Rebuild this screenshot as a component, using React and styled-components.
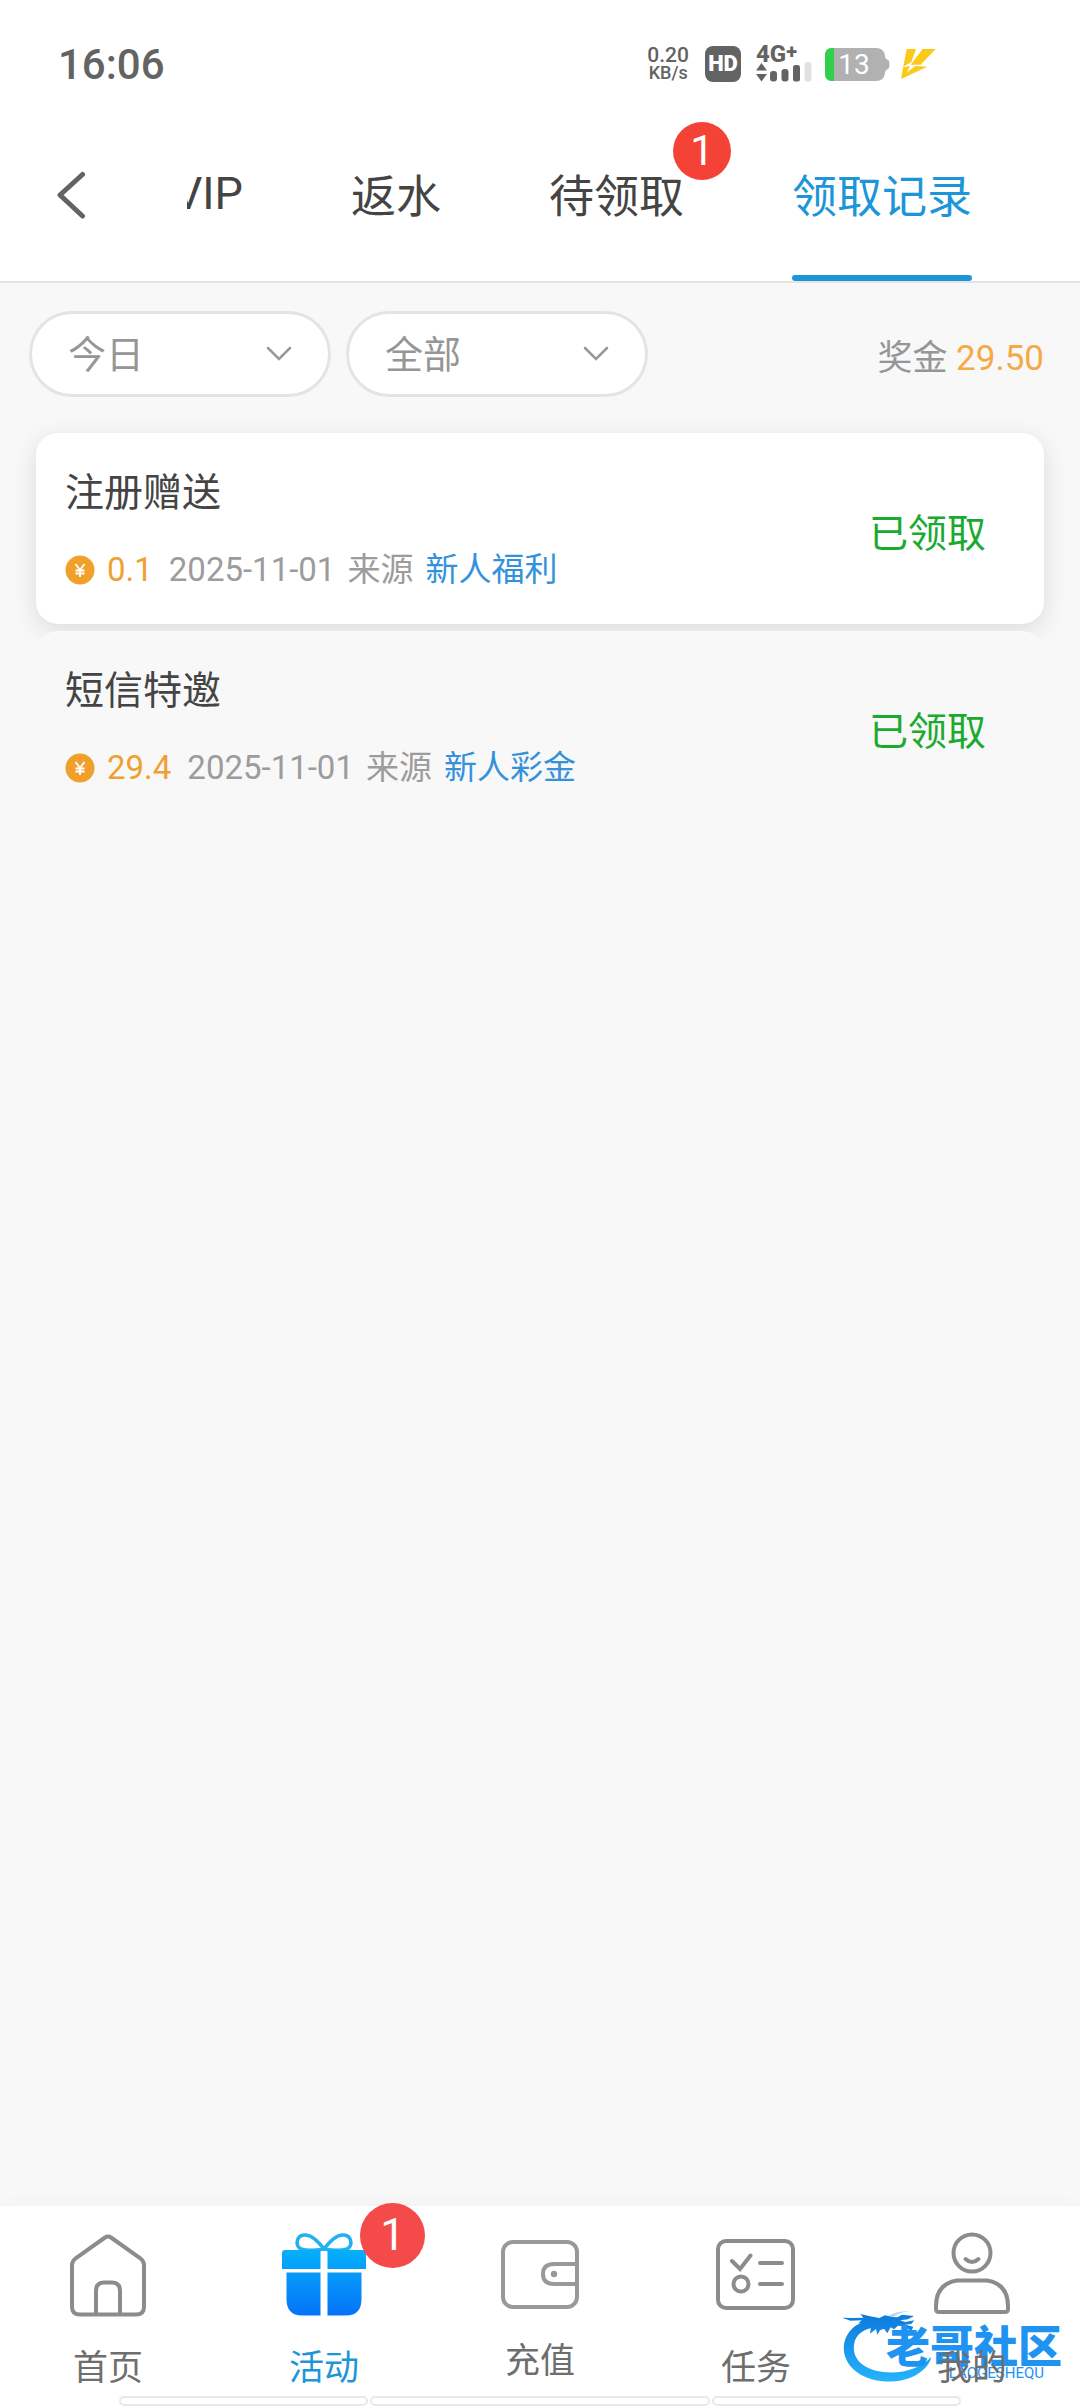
import React from 'react';
import styled, { createGlobalStyle } from 'styled-components';

const GlobalStyle = createGlobalStyle`
  * {
    box-sizing: border-box;
  }

  body {
    margin: 0;
    background: #f8f8f8;
    font-family: Roboto, "Noto Sans CJK SC", sans-serif;
    color: #444;
  }

  button,
  select {
    font-family: inherit;
  }
`;

const Page = styled.div`
  display: flex;
  flex-direction: column;
  min-height: 100vh;
  overflow-x: hidden;
`;

const Header = styled.header`
  background: #fff;
  border-bottom: 2px solid #e4e4e4;
`;

/* ---------- status bar ---------- */

const StatusBar = styled.div`
  display: flex;
  align-items: center;
  justify-content: space-between;
  height: 106px;
  padding: 22px 143px 0 58px;
  color: #636363;
`;

const Clock = styled.span`
  font-size: 42px;
  font-weight: 500;
`;

const StatusIcons = styled.div`
  display: flex;
  align-items: center;
  gap: 10px;
`;

const NetSpeed = styled.div`
  display: flex;
  flex-direction: column;
  align-items: center;
  margin-right: 6px;
  font-size: 21px;
  font-weight: 500;
  line-height: 18px;
`;

const SpeedUnit = styled.span`
  font-size: 18px;
`;

const HdTag = styled.span`
  width: 36px;
  margin-right: 5px;
  border-radius: 8px;
  background: #636363;
  color: #fff;
  font-size: 22px;
  font-weight: 900;
  line-height: 36px;
  text-align: center;
`;

const Signal = styled.div`
  display: flex;
  flex-direction: column;
  width: 58px;
`;

const SignalType = styled.span`
  display: flex;
  font-size: 24px;
  font-weight: 800;
  line-height: 16px;
`;

const SignalPlus = styled.span`
  font-size: 20px;
  line-height: 10px;
`;

const Battery = styled.div`
  position: relative;
  display: flex;
  width: 66px;
  height: 33px;
`;

const BatteryLevel = styled.span`
  position: absolute;
  inset: 0 6px 0 0;
  color: #fff;
  font-size: 28px;
  line-height: 33px;
  text-align: center;
`;

/* ---------- tabs ---------- */

const TabBar = styled.div`
  display: flex;
  height: 175px;
`;

const BackButton = styled.button`
  display: flex;
  align-items: center;
  width: 187px;
  padding: 2px 0 0 56px;
  border: 0;
  background: none;
`;

const Tabs = styled.nav`
  display: flex;
  flex: 1;
  justify-content: flex-end;
  gap: 108px;
  padding-right: 108px;
  overflow: hidden;
`;

const Tab = styled.a`
  position: relative;
  display: flex;
  flex-shrink: 0;
  align-items: center;
  color: ${({ $active }) => ($active ? '#1c96d8' : '#444')};
  font-size: 45px;
  text-decoration: none;

  &::after {
    content: '';
    position: absolute;
    right: 0;
    bottom: 0;
    left: 0;
    height: 6px;
    border-radius: 3px;
    background: ${({ $active }) => ($active ? '#1c96d8' : 'transparent')};
  }
`;

const TabBadge = styled.span`
  position: absolute;
  top: 16px;
  right: -47px;
  width: 58px;
  border-radius: 50%;
  background: #f44336;
  color: #fff;
  font-size: 42px;
  line-height: 58px;
  text-align: center;
`;

/* ---------- filters ---------- */

const Main = styled.main`
  flex: 1;
`;

const Filters = styled.div`
  display: flex;
  align-items: center;
  gap: 15px;
  padding: 28px 36px 36px 29px;
`;

const SelectWrap = styled.label`
  position: relative;
  display: flex;
  flex: 0 1 302px;
  align-items: center;
`;

const Select = styled.select`
  width: 100%;
  height: 86px;
  padding: 2px 72px 0 36px;
  border: 3px solid #e4e4e4;
  border-radius: 43px;
  background: #fff;
  color: #969696;
  font-size: 38px;
  appearance: none;
`;

const SelectArrow = styled.svg`
  position: absolute;
  right: 39px;
  pointer-events: none;
`;

const Bonus = styled.div`
  margin-left: auto;
  color: #969696;
  font-size: 35px;
  white-space: nowrap;
`;

const BonusAmount = styled.span`
  color: #f5a947;
`;

/* ---------- records ---------- */

const Records = styled.ul`
  display: flex;
  flex-direction: column;
  gap: 7px;
  margin: 0;
  padding: 0 36px;
  list-style: none;
`;

const Record = styled.li`
  position: relative;
  display: flex;
  align-items: center;
  justify-content: space-between;
  padding: 32px 58px 30px 29px;
  border-radius: 22px;
  background: ${({ $raised }) => ($raised ? '#fff' : '#f8f8f8')};
  box-shadow: ${({ $raised }) => ($raised ? '0 6px 24px rgba(0, 0, 0, 0.12)' : 'none')};
`;

const RecordInfo = styled.div`
  display: flex;
  flex-direction: column;
  gap: 25px;
`;

const RecordTitle = styled.h2`
  margin: 0;
  font-size: 39px;
  font-weight: 400;
  line-height: 56px;
`;

const RecordMeta = styled.div`
  display: flex;
  align-items: center;
  gap: 12px;
  color: #9c9c9c;
  font-size: 33px;
  line-height: 48px;
`;

const Amount = styled.span`
  margin-right: 4px;
  color: #f0a030;
`;

const SourceLink = styled.a`
  color: #3492dc;
  text-decoration: none;
`;

const RecordState = styled.span`
  color: #1aaa30;
  font-size: 39px;
`;

/* ---------- bottom navigation ---------- */

const BottomBar = styled.footer`
  background: #fff;
  box-shadow: 0 0 16px rgba(0, 0, 0, 0.04);
`;

const NavItems = styled.nav`
  display: grid;
  grid-template-columns: repeat(5, 1fr);
  height: 190px;
`;

const NavItem = styled.a`
  position: relative;
  display: flex;
  flex-direction: column;
  align-items: center;
  gap: 22px;
  padding-top: 26px;
  color: ${({ $active }) => ($active ? '#1c96d8' : '#6e6e6e')};
  text-decoration: none;
`;

const NavLabel = styled.span`
  position: relative;
  font-size: 35px;
  z-index: 1;
`;

const NavBadge = styled.span`
  position: absolute;
  top: -3px;
  left: calc(50% + 36px);
  width: 65px;
  border-radius: 50%;
  background: #f54a4a;
  color: #fff;
  font-size: 44px;
  line-height: 65px;
  text-align: center;
`;

const Strips = styled.div`
  display: flex;
  gap: 2px;
  padding: 0 11% 2px;
`;

const Strip = styled.span`
  flex: ${({ $grow }) => $grow};
  height: 10px;
  border: 2px solid #e8e8e8;
  border-radius: 5px;
`;

const Watermark = styled.div`
  position: absolute;
  top: 104px;
  right: 18px;
  display: flex;
  color: #1f93f2;
`;

const WatermarkText = styled.div`
  display: flex;
  flex-direction: column;
  align-items: center;
  margin: 20px 0 0 -46px;
  font-size: 44px;
  font-weight: 900;
  line-height: 36px;
  white-space: nowrap;
`;

const WatermarkPinyin = styled.span`
  align-self: flex-end;
  margin-right: 18px;
  font-size: 15px;
  font-weight: 400;
  line-height: 14px;
`;

const BackIcon = () => (
  <svg width="30" height="50" viewBox="0 0 30 50" fill="none" stroke="#636363" strokeWidth="5" strokeLinecap="round" strokeLinejoin="round">
    <path d="M26.500 4.500L4 25L26.500 46" />
  </svg>
);

const SignalIcon = () => (
  <svg width="58" height="20" viewBox="0 0 58 20" fill="#636363">
    <path d="M0 8.500L5.500 1L11 8.500ZM0 12H11L5.500 19.500Z" />
    <rect x="14" y="9" width="7" height="10.500" rx="3" />
    <rect x="25.500" y="7" width="7" height="12.500" rx="3" />
    <rect x="37" y="3" width="7" height="16.500" rx="2.500" />
    <rect x="48.500" y="0" width="7" height="19.500" rx="2" fill="#e2e2e2" />
  </svg>
);

const BatteryIcon = () => (
  <svg width="66" height="33" viewBox="0 0 66 33">
    <clipPath id="batteryShape">
      <path d="M8 0H52Q60 0 61 8Q61 11 63 11.500Q65.500 12 65.500 16.500Q65.500 21 63 21.500Q61 22 61 25Q60 33 52 33H8Q1 33 1 25V8Q1 0 8 0Z" />
    </clipPath>
    <g clipPath="url(#batteryShape)">
      <rect width="66" height="33" fill="#b1b1b1" />
      <rect width="10" height="33" fill="#2fd14b" />
    </g>
  </svg>
);

const BoltIcon = () => (
  <svg width="37" height="32" viewBox="0 0 111 96" fill="#fbc917">
    <path d="M20 3H48L34 42L10 56Z" />
    <path d="M68 3H107L62 50H32Z" />
    <path d="M9 58L30 54L20 74L46 54L82 56L3 93Z" />
  </svg>
);

const CoinIcon = () => (
  <svg width="30" height="30" viewBox="0 0 30 30">
    <circle cx="15" cy="15" r="14.500" fill="#f0a12c" />
    <path d="M10.500 9L15 15L19.500 9M15 15V22M10.500 15.500H19.500M10.500 18.500H19.500" fill="none" stroke="#fff" strokeWidth="1.800" />
  </svg>
);

const ArrowIcon = () => (
  <SelectArrow width="26" height="16" viewBox="0 0 26 16" fill="none" stroke="#999" strokeWidth="2.500" strokeLinecap="round">
    <path d="M2 2L13 13L24 2" />
  </SelectArrow>
);

const HomeIcon = () => (
  <svg width="84" height="85" viewBox="0 0 84 85" fill="none" stroke="#8c8c8c" strokeWidth="4">
    <path d="M39 5.500Q42 3.500 45 5.500L74 26Q78 29 78 33V75Q78 82.500 70 82.500H14Q6 82.500 6 75V33Q6 29 10 26Z" />
    <path d="M30 82V59Q30 50.500 38 50.500H46Q54 50.500 54 59V82" />
  </svg>
);

const GiftIcon = () => (
  <svg width="84" height="85" viewBox="0 0 84 85">
    <defs>
      <linearGradient id="giftFill" x1="0" y1="18" x2="0" y2="84" gradientUnits="userSpaceOnUse">
        <stop offset="0" stopColor="#06b0fb" />
        <stop offset="1" stopColor="#0573f8" />
      </linearGradient>
    </defs>
    <path
      d="M42 17C36 9 29 2 22 3C14 4 13 14 19 17C25 19 36 18 42 17C48 9 55 2 62 3C70 4 71 14 65 17C59 19 48 18 42 17Z"
      fill="none"
      stroke="#1fb2ee"
      strokeWidth="3.500"
    />
    <g fill="url(#giftFill)">
      <path d="M3 18H38.500V37H0V21Q0 18 3 18Z" />
      <path d="M45.500 18H81Q84 18 84 21V37H45.500Z" />
      <path d="M4.500 40.500H38.500V83.500H20Q4.500 83.500 4.500 67Z" />
      <path d="M45.500 40.500H79.500V67Q79.500 83.500 64 83.500H45.500Z" />
    </g>
  </svg>
);

const WalletIcon = () => (
  <svg width="78" height="78" viewBox="0 0 78 78" fill="none" stroke="#999" strokeWidth="4">
    <rect x="2" y="10" width="74" height="65" rx="10" />
    <path d="M75 32H53Q42 32 42 42Q42 52 53 52H75" />
    <circle cx="53" cy="42" r="3.200" fill="#999" stroke="none" />
  </svg>
);

const TaskIcon = () => (
  <svg width="84" height="85" viewBox="0 0 84 85" fill="none" stroke="#8c8c8c" strokeWidth="4" strokeLinecap="round">
    <rect x="4" y="9" width="75" height="67" rx="8" />
    <path d="M18 29L26 37L36.500 23.500M46 31H68M46 52H68" />
    <circle cx="27" cy="52" r="7.500" />
  </svg>
);

const UserIcon = () => (
  <svg width="84" height="85" viewBox="0 0 84 85" fill="none" stroke="#8c8c8c" strokeWidth="4" strokeLinecap="round">
    <circle cx="42" cy="21" r="18.500" />
    <path d="M35.500 27Q42 33 48.500 27" />
    <path d="M27 48.500H57Q78 52 78 74V77Q78 80 75 80H9Q6 80 6 77V74Q6 52 27 48.500Z" />
  </svg>
);

const DragonLogo = () => (
  <svg width="92" height="74" viewBox="180 360 276 222">
    <defs>
      <linearGradient id="dragonFill" x1="0" y1="370" x2="0" y2="570" gradientUnits="userSpaceOnUse">
        <stop offset="0" stopColor="#0d79dc" />
        <stop offset="1" stopColor="#24b2fb" />
      </linearGradient>
    </defs>
    <g fill="url(#dragonFill)">
      <path d="M262 393C205 403 178 462 198 506C225 572 330 590 395 562C430 545 450 522 454 500C425 534 370 552 310 546C255 540 216 510 222 464C227 432 252 416 288 412Z" />
      <path d="M186 383L218 384L250 383L241 372L270 379L298 384L315 376L335 381L352 382L366 374L402 378L384 388L360 391L376 396L403 391L394 402L374 404L400 410L394 424L374 409L354 407L342 418L332 412L322 430L312 416L300 421L292 434L288 417L270 431L273 411L254 411L262 399L235 400L245 391L212 392Z" />
      <path d="M316 382Q350 362 388 363Q350 370 335 386Z" opacity="0.300" />
    </g>
  </svg>
);

const records = [
  { title: '注册赠送', amount: '0.1', date: '2025-11-01', source: '新人福利', raised: true },
  { title: '短信特邀', amount: '29.4', date: '2025-11-01', source: '新人彩金', raised: false },
];

const App = () => {
  return (
    <Page>
      <GlobalStyle />
      <Header>
        <StatusBar>
          <Clock>16:06</Clock>
          <StatusIcons>
            <NetSpeed>
              0.20
              <SpeedUnit>KB/s</SpeedUnit>
            </NetSpeed>
            <HdTag>HD</HdTag>
            <Signal>
              <SignalType>
                4G<SignalPlus>+</SignalPlus>
              </SignalType>
              <SignalIcon />
            </Signal>
            <Battery>
              <BatteryIcon />
              <BatteryLevel>13</BatteryLevel>
            </Battery>
            <BoltIcon />
          </StatusIcons>
        </StatusBar>

        <TabBar>
          <BackButton aria-label="返回">
            <BackIcon />
          </BackButton>
          <Tabs>
            <Tab href="#vip">VIP</Tab>
            <Tab href="#rebate">返水</Tab>
            <Tab href="#pending">
              待领取
              <TabBadge>1</TabBadge>
            </Tab>
            <Tab href="#history" $active>领取记录</Tab>
          </Tabs>
        </TabBar>
      </Header>

      <Main>
        <Filters>
          <SelectWrap>
            <Select aria-label="日期" defaultValue="today">
              <option value="today">今日</option>
            </Select>
            <ArrowIcon />
          </SelectWrap>
          <SelectWrap>
            <Select aria-label="类型" defaultValue="all">
              <option value="all">全部</option>
            </Select>
            <ArrowIcon />
          </SelectWrap>
          <Bonus>
            奖金 <BonusAmount>29.50</BonusAmount>
          </Bonus>
        </Filters>

        <Records>
          {records.map((record) => (
            <Record key={record.title} $raised={record.raised}>
              <RecordInfo>
                <RecordTitle>{record.title}</RecordTitle>
                <RecordMeta>
                  <CoinIcon />
                  <Amount>{record.amount}</Amount>
                  <span>{record.date}</span>
                  <span>来源</span>
                  <SourceLink href="#source">{record.source}</SourceLink>
                </RecordMeta>
              </RecordInfo>
              <RecordState>已领取</RecordState>
            </Record>
          ))}
        </Records>
      </Main>

      <BottomBar>
        <NavItems>
          <NavItem href="#home">
            <HomeIcon />
            <NavLabel>首页</NavLabel>
          </NavItem>
          <NavItem href="#activity" $active>
            <GiftIcon />
            <NavLabel>活动</NavLabel>
            <NavBadge>1</NavBadge>
          </NavItem>
          <NavItem href="#recharge">
            <WalletIcon />
            <NavLabel>充值</NavLabel>
          </NavItem>
          <NavItem href="#tasks">
            <TaskIcon />
            <NavLabel>任务</NavLabel>
          </NavItem>
          <NavItem href="#mine">
            <UserIcon />
            <Watermark>
              <DragonLogo />
              <WatermarkText>
                老哥社区
                <WatermarkPinyin>LAOGESHEQU</WatermarkPinyin>
              </WatermarkText>
            </Watermark>
            <NavLabel>我的</NavLabel>
          </NavItem>
        </NavItems>
        <Strips>
          <Strip $grow={248} />
          <Strip $grow={341} />
          <Strip $grow={248} />
        </Strips>
      </BottomBar>
    </Page>
  );
};

export default App;
